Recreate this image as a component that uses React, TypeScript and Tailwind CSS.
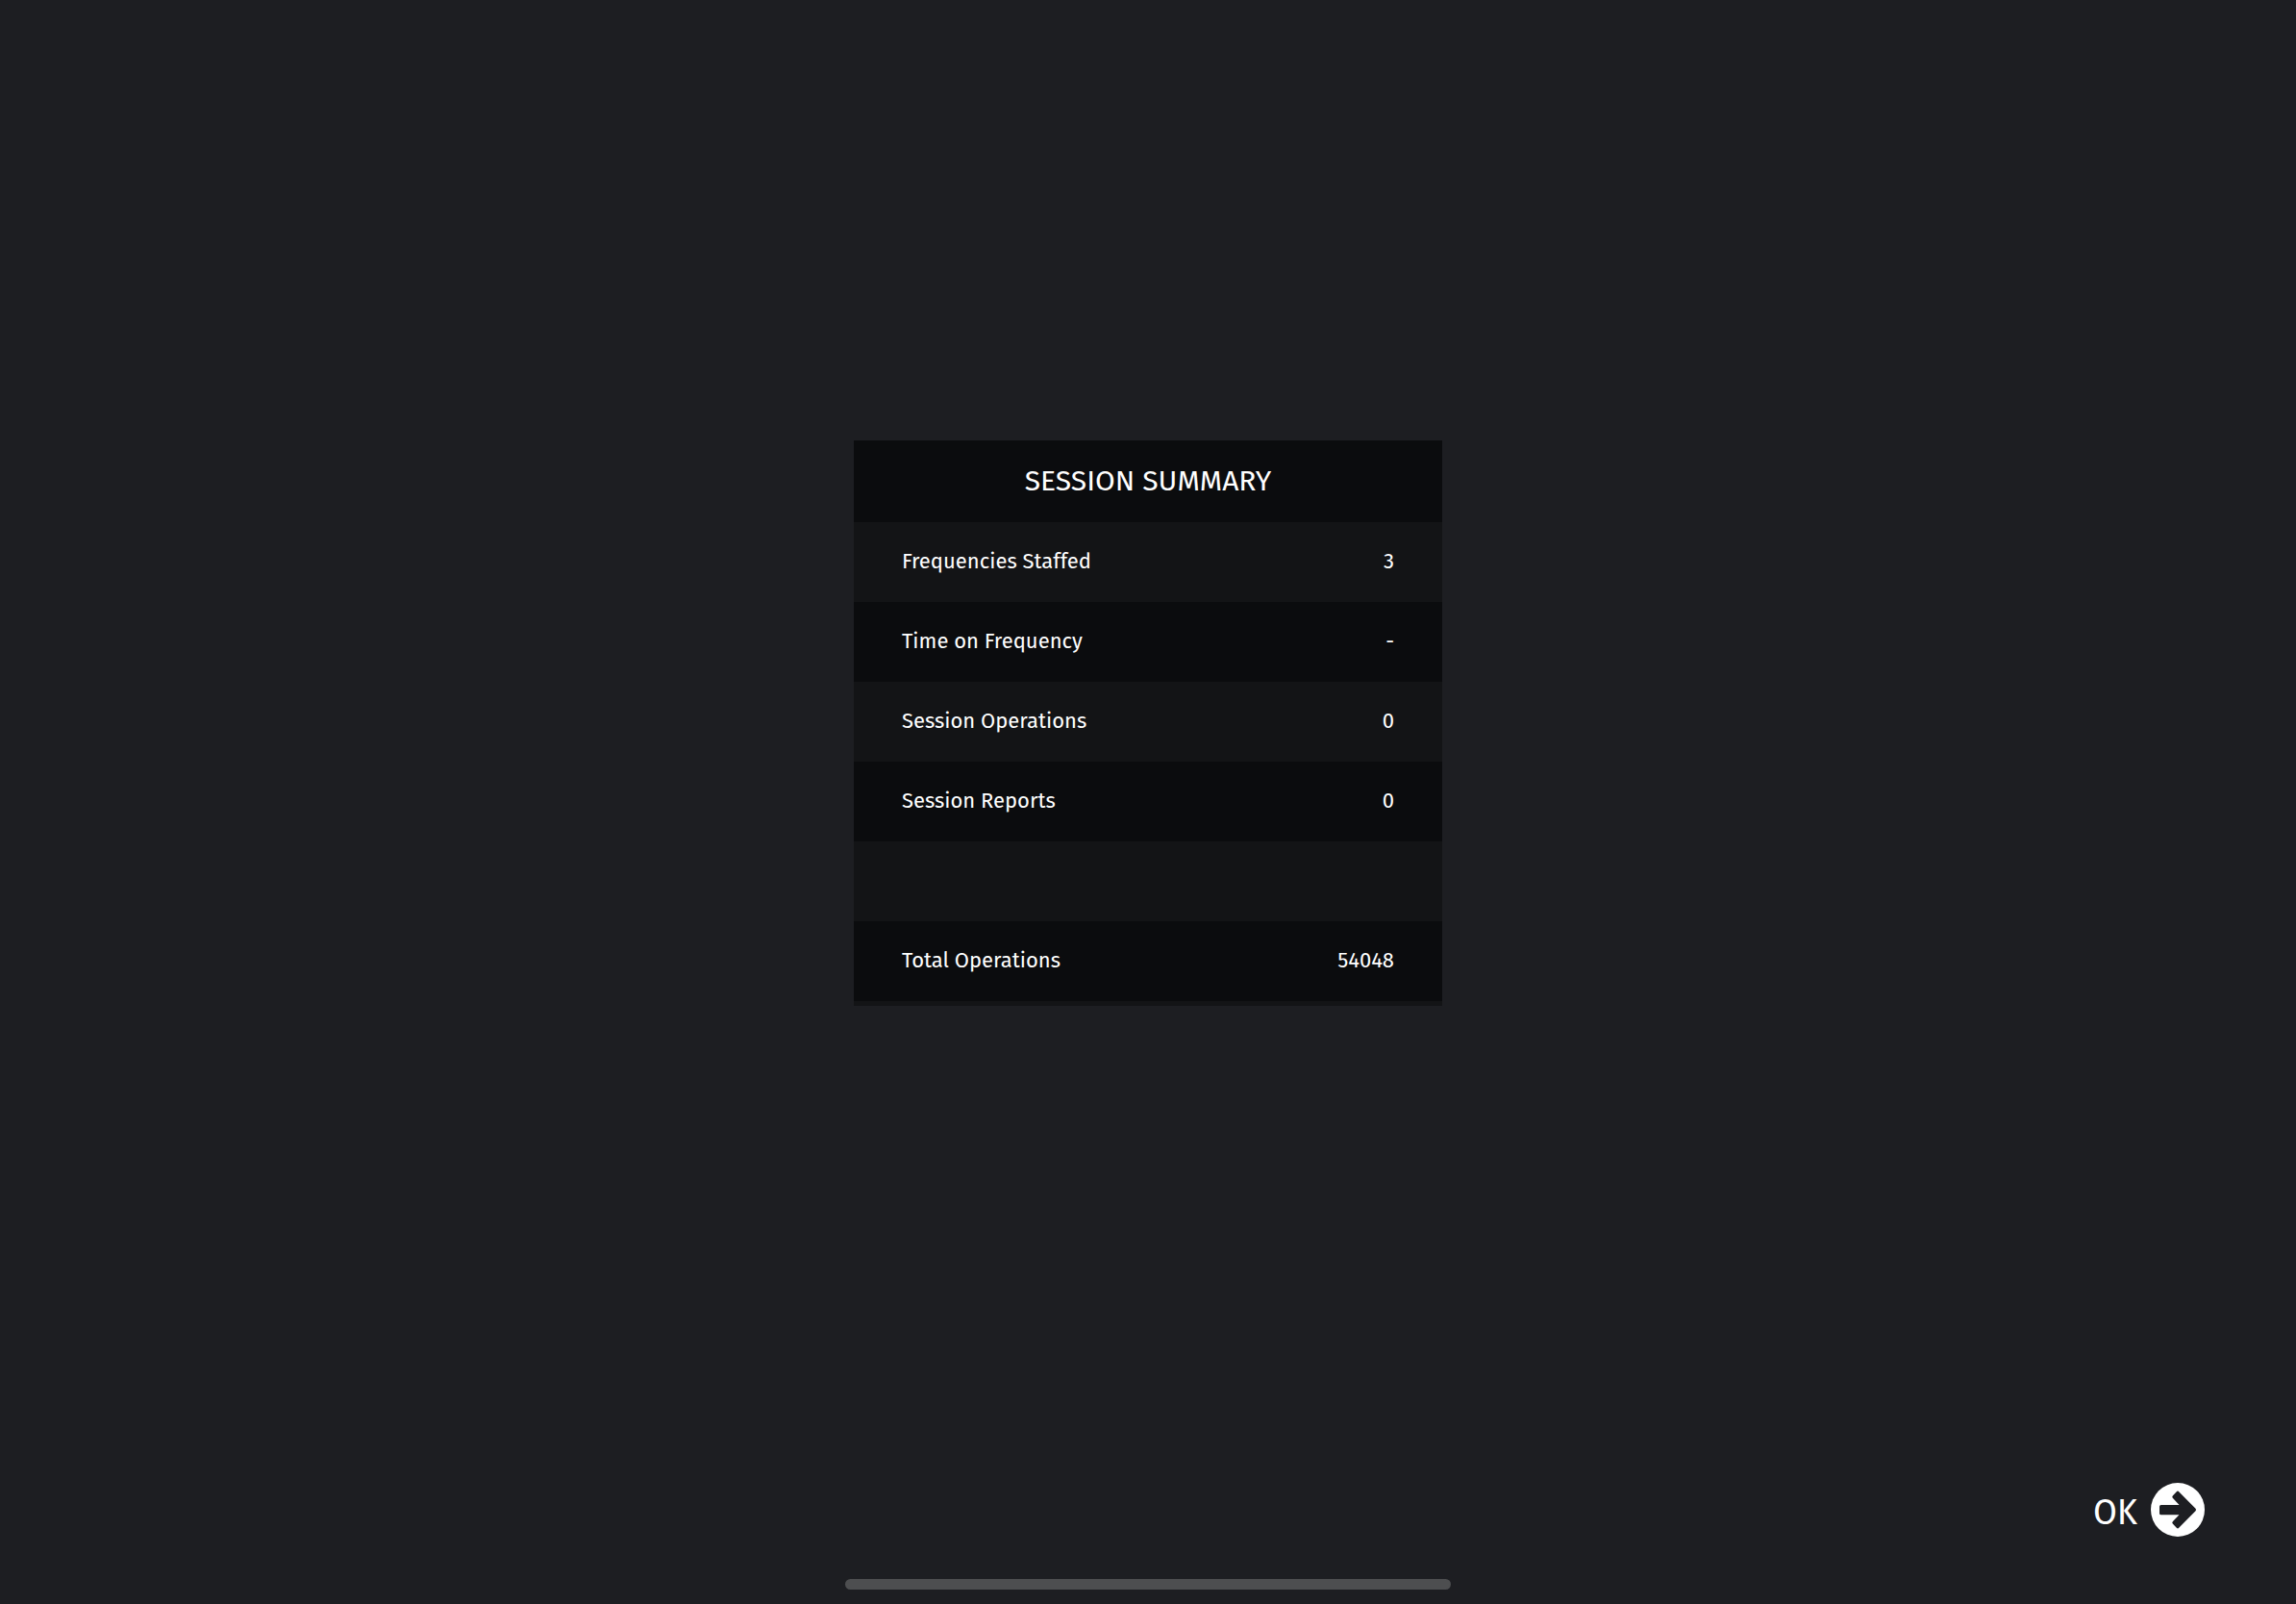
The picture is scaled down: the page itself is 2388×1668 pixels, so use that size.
const rows = [
  { label: "Frequencies Staffed", value: "3" },
  { label: "Time on Frequency", value: "-" },
  { label: "Session Operations", value: "0" },
  { label: "Session Reports", value: "0" },
  { label: "", value: "" },
  { label: "Total Operations", value: "54048" },
];

function ArrowCircle() {
  return (
    <svg viewBox="0 0 168 168" className="size-14" aria-hidden="true">
      <circle cx="84" cy="84" r="84" fill="white" />
      <path
        d="M84 31 L136 84 L84 137 L72 124 L100 95 L32 95 L32 74 L100 74 L72 44 Z"
        fill="#1d1e22"
        stroke="#1d1e22"
        strokeWidth="10"
        strokeLinejoin="round"
      />
    </svg>
  );
}

export default function App() {
  return (
    <div className="flex min-h-screen flex-col bg-[#1d1e22] font-['Fira_Sans','Noto_Sans',sans-serif] text-white">
      <main className="flex grow flex-col items-center pt-[458px]">
        <div className="w-[612px] max-w-full bg-[#131416] pb-[5px]">
          <table className="w-full border-collapse">
            <caption className="bg-[#0b0c0e] text-[30px] leading-[85px]">SESSION SUMMARY</caption>
            <tbody>
              {rows.map((row, i) => (
                <tr key={i} className="h-[83px] text-[22px] even:bg-[#0b0c0e]">
                  <th scope="row" className="pb-0.5 pl-[50px] text-left font-normal">{row.label}</th>
                  <td className="pr-[50px] pb-0.5 text-right">{row.value}</td>
                </tr>
              ))}
            </tbody>
          </table>
        </div>
      </main>
      <footer className="flex flex-col items-center">
        <button className="mr-[95px] mb-11 flex items-center gap-3.5 self-end text-4xl leading-none">
          <span className="pt-1.5">OK</span>
          <ArrowCircle />
        </button>
        <div className="mb-[15px] h-[11px] w-[630px] max-w-full rounded-full bg-[#4d4e50]" />
      </footer>
    </div>
  );
}
